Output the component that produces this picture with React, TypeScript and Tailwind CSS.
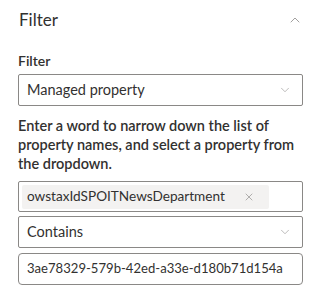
import { ChevronDown, ChevronUp, X } from "lucide-react";

const font = { fontFamily: 'Lato, "Liberation Sans", sans-serif' };

function Dropdown({ value }: { value: string }) {
  return (
    <div className="flex h-[32px] items-center justify-between rounded-[2px] border border-[#8a8886] pl-[8px] pr-[10px] text-[14.5px] text-[#323130]">
      <span>{value}</span>
      <ChevronDown className="h-[14px] w-[14px] text-[#a19f9d]" strokeWidth={1.2} />
    </div>
  );
}

export default function App() {
  return (
    <div className="min-h-screen bg-white text-[#323130]" style={font}>
      <div className="flex items-center justify-between pl-[19px] pr-[15px] pt-[9px]">
        <h2 className="text-[17px] font-normal leading-[22px]">Filter</h2>
        <ChevronUp className="h-[16px] w-[16px] text-[#8a8886]" strokeWidth={1.2} />
      </div>

      <div className="pl-[18px] pr-[15px] pt-[20px]">
        <label className="block text-[14px] font-semibold leading-[20px]">Filter</label>
        <div className="mt-[3px]">
          <Dropdown value="Managed property" />
        </div>

        <p className="mt-[10px] text-[14.5px] font-semibold leading-[19px]">
          Enter a word to narrow down the list of property names, and select a property from the
          dropdown.
        </p>

        <div className="mt-[8px] flex h-[31px] items-center rounded-[2px] border border-[#8a8886] pl-[3px]">
          <div className="flex h-[24px] items-center gap-[18px] rounded-[2px] bg-[#f3f2f1] pl-[5px] pr-[14px] text-[13.6px]">
            <span>owstaxIdSPOITNewsDepartment</span>
            <X className="h-[12px] w-[12px] text-[#8a8886]" strokeWidth={1.3} />
          </div>
        </div>

        <div className="mt-[4px]">
          <Dropdown value="Contains" />
        </div>

        <div className="mt-[5px] flex h-[32px] items-center overflow-hidden whitespace-nowrap rounded-[4px] border border-[#8a8886] px-[8px] text-[13.1px]">
          3ae78329-579b-42ed-a33e-d180b71d154a
        </div>
      </div>
    </div>
  );
}
